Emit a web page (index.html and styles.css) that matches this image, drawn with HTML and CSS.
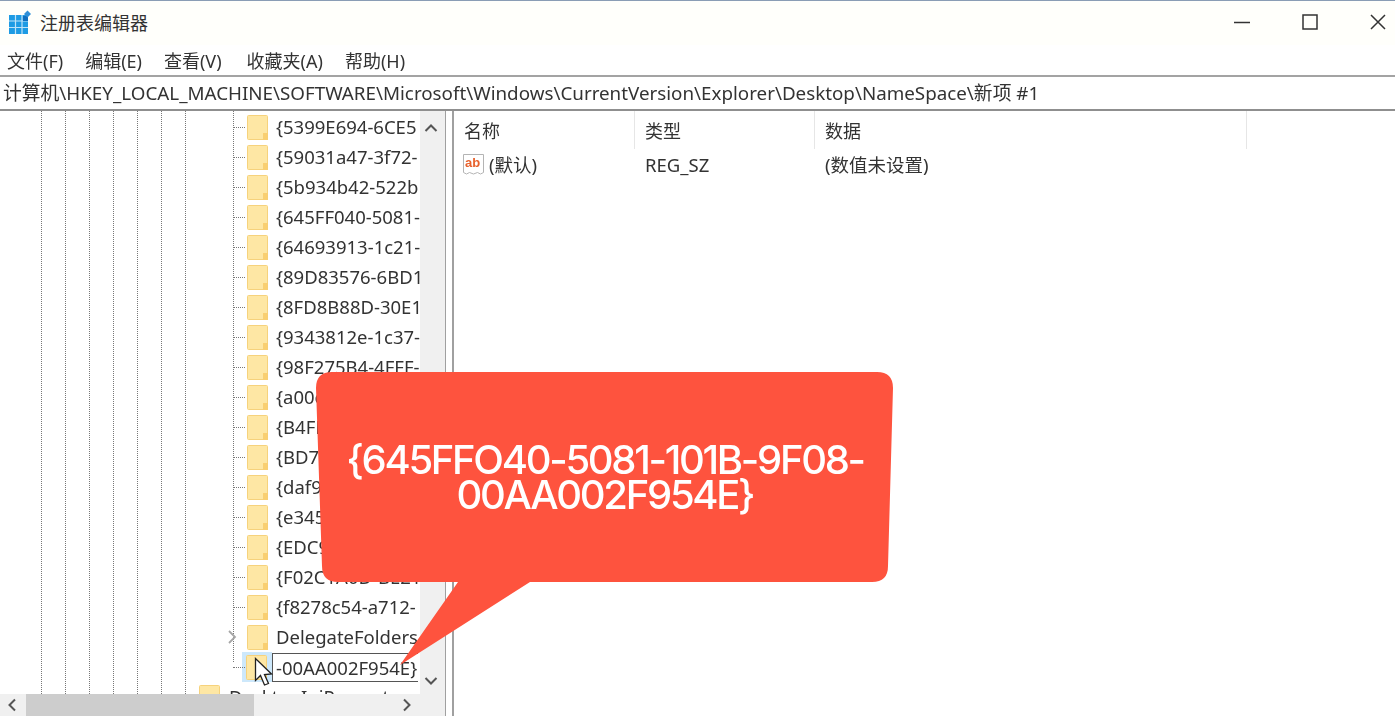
FILE: index.html
```html
<!DOCTYPE html>
<html lang="zh-CN">
<head>
  <meta charset="utf-8">
  <title>注册表编辑器</title>
  <link rel="stylesheet" href="styles.css">
</head>
<body>

<svg class="defs" width="0" height="0">
  <symbol id="folder" viewBox="0 0 22 25">
    <rect x="0.5" y="0.5" width="20" height="24" rx="1" fill="#fee7a4" stroke="#f6d27c"/>
    <rect x="16" y="18" width="5" height="7" fill="#f9cf72"/>
  </symbol>
</svg>

<div class="window">

  <div class="titlebar">
    <svg class="appicon" width="24" height="24" viewBox="0 0 24 24">
      <rect x="1" y="5" width="19" height="19" fill="#1e9be4"/>
      <path d="M1 11h19M1 17.500h19M7.500 5v19M14 5v19" stroke="#bfe3f8" stroke-width="1.200"/>
      <rect x="15" y="6" width="5" height="5" fill="#0f6fc0"/>
      <path d="M19.500 0.500l3.500 3.500-3.500 3.500-3.500-3.500z" fill="#2f8fd8"/>
    </svg>
    <span class="apptitle">注册表编辑器</span>
    <div class="winbtns">
      <svg width="16" height="16" viewBox="0 0 16 16"><path d="M0 8.500h16" stroke="#333" stroke-width="1.500"/></svg>
      <svg width="16" height="16" viewBox="0 0 16 16"><rect x="1" y="1" width="14" height="14" fill="none" stroke="#333" stroke-width="1.500"/></svg>
      <svg width="16" height="16" viewBox="0 0 16 16"><path d="M1 1l14 14M15 1l-14 14" stroke="#333" stroke-width="1.500"/></svg>
    </div>
  </div>

  <div class="menubar">
    <span>文件(F)</span>
    <span>编辑(E)</span>
    <span>查看(V)</span>
    <span class="fav">收藏夹(A)</span>
    <span>帮助(H)</span>
  </div>

  <div class="addressbar">计算机\HKEY_LOCAL_MACHINE\SOFTWARE\Microsoft\Windows\CurrentVersion\Explorer\Desktop\NameSpace\新项 #1</div>

  <div class="panes">

    <div class="treepane">
      <div class="treetop">
        <div class="tree">
          <div class="guides"><i></i><i></i><i></i><i></i><i></i><i></i><i></i><i></i></div>
          <div class="row"><b class="dash"></b><svg class="fold"><use href="#folder"/></svg><span>{5399E694-6CE5</span></div>
          <div class="row"><b class="dash"></b><svg class="fold"><use href="#folder"/></svg><span>{59031a47-3f72-</span></div>
          <div class="row"><b class="dash"></b><svg class="fold"><use href="#folder"/></svg><span>{5b934b42-522b</span></div>
          <div class="row"><b class="dash"></b><svg class="fold"><use href="#folder"/></svg><span>{645FF040-5081-</span></div>
          <div class="row"><b class="dash"></b><svg class="fold"><use href="#folder"/></svg><span>{64693913-1c21-</span></div>
          <div class="row"><b class="dash"></b><svg class="fold"><use href="#folder"/></svg><span>{89D83576-6BD1</span></div>
          <div class="row"><b class="dash"></b><svg class="fold"><use href="#folder"/></svg><span>{8FD8B88D-30E1</span></div>
          <div class="row"><b class="dash"></b><svg class="fold"><use href="#folder"/></svg><span>{9343812e-1c37-</span></div>
          <div class="row"><b class="dash"></b><svg class="fold"><use href="#folder"/></svg><span>{98F275B4-4FFF-</span></div>
          <div class="row"><b class="dash"></b><svg class="fold"><use href="#folder"/></svg><span>{a00e</span></div>
          <div class="row"><b class="dash"></b><svg class="fold"><use href="#folder"/></svg><span>{B4FB</span></div>
          <div class="row"><b class="dash"></b><svg class="fold"><use href="#folder"/></svg><span>{BD7A</span></div>
          <div class="row"><b class="dash"></b><svg class="fold"><use href="#folder"/></svg><span>{daf9</span></div>
          <div class="row"><b class="dash"></b><svg class="fold"><use href="#folder"/></svg><span>{e345</span></div>
          <div class="row"><b class="dash"></b><svg class="fold"><use href="#folder"/></svg><span>{EDC9</span></div>
          <div class="row"><b class="dash"></b><svg class="fold"><use href="#folder"/></svg><span>{F02C1A0D-BE21</span></div>
          <div class="row"><b class="dash"></b><svg class="fold"><use href="#folder"/></svg><span>{f8278c54-a712-</span></div>
          <div class="row">
            <svg class="chev" width="10" height="14" viewBox="0 0 10 14"><path d="M2 1l6 6-6 6" fill="none" stroke="#a6a6a6" stroke-width="1.800"/></svg>
            <svg class="fold"><use href="#folder"/></svg><span>DelegateFolders</span>
          </div>
          <div class="row selected">
            <b class="dash"></b>
            <div class="selbox"><svg class="fold"><use href="#folder"/></svg></div>
            <span class="editbox">-00AA002F954E}</span>
          </div>
          <div class="row outer"><svg class="fold"><use href="#folder"/></svg><span>DesktopIniProperty</span></div>
        </div>
        <div class="vscroll">
          <svg width="14" height="10" viewBox="0 0 14 10"><path d="M1.500 8l5.500-5.500 5.500 5.500" fill="none" stroke="#555" stroke-width="2"/></svg>
          <svg width="14" height="10" viewBox="0 0 14 10"><path d="M1.500 2l5.500 5.500 5.500-5.500" fill="none" stroke="#555" stroke-width="2"/></svg>
        </div>
      </div>
      <div class="hscroll">
        <svg class="harrow" width="10" height="14" viewBox="0 0 10 14"><path d="M8 1.500l-5.500 5.500 5.500 5.500" fill="none" stroke="#555" stroke-width="2"/></svg>
        <div class="thumb"></div>
        <svg class="harrow right" width="10" height="14" viewBox="0 0 10 14"><path d="M2 1.500l5.500 5.500-5.500 5.500" fill="none" stroke="#555" stroke-width="2"/></svg>
      </div>
    </div>

    <div class="listpane">
      <div class="listhead">
        <div class="col name">名称</div>
        <div class="col type">类型</div>
        <div class="col data">数据</div>
      </div>
      <div class="listrow">
        <div class="col name">
          <svg width="24" height="24" viewBox="0 0 24 24">
            <path d="M1.500 2.500h20v18l-3 1.500-3-1.500-4 1.500-4-1.500-3 1.500-3-1.500z" fill="#fff" stroke="#b4b4b4"/>
            <text class="abtext" x="3" y="15">ab</text>
          </svg>
          <span>(默认)</span>
        </div>
        <div class="col type">REG_SZ</div>
        <div class="col data">(数值未设置)</div>
      </div>
    </div>

  </div>

  <svg class="cursor" width="20" height="30" viewBox="0 0 20 30">
    <path d="M1.500 1.500v22l5-5 4 9.500 4-1.500-4-9 7-.5z" fill="#fff" stroke="#222" stroke-width="1.300"/>
  </svg>

  <div class="callout">
    <svg class="bubble" width="600" height="310" viewBox="0 0 600 310">
      <path d="M22 2H567Q583 2 583 18L578 196Q578 212 562 212H220L90 295L148 212H28Q12 212 12 196L6 18Q6 2 22 2Z" fill="#fe533e"/>
    </svg>
    <div class="bubbletext">{645FFO40-5081-101B-9F08-<br>00AA002F954E}</div>
  </div>

</div>

</body>
</html>
```

FILE: styles.css
```css
html, body {
  margin: 0;
  height: 100%;
  overflow: hidden;
  background-color: #fff;
}

body {
  font-family: "Noto Sans", "Noto Sans CJK SC", sans-serif;
  font-size: 18.500px;
  color: #333;
}

.defs {
  display: block;
}

.window {
  position: relative;
  width: 1395px;
  height: 716px;
  overflow: hidden;
  filter: blur(0.35px);
}

/* title bar */
.titlebar {
  display: flex;
  align-items: center;
  box-sizing: border-box;
  height: 45px;
  padding-left: 8px;
  padding-bottom: 2px;
  border-top: 1px solid #8a9db5;
  background-color: #fffffb;
}

.appicon {
  margin-right: 8px;
}

.apptitle {
  font-size: 18px;
}

.winbtns {
  display: flex;
  gap: 52px;
  margin-left: auto;
  margin-right: 9px;
}

/* menu */
.menubar {
  display: flex;
  gap: 22px;
  align-items: center;
  height: 29px;
  padding-left: 7px;
  padding-bottom: 1px;
  font-size: 18px;
  background-color: #fff;
}

.menubar .fav {
  margin-left: 3px;
}

.addressbar {
  height: 32px;
  line-height: 33px;
  padding-left: 3px;
  border-top: 2px solid #a3a3a3;
  border-bottom: 2px solid #8f8f8f;
  white-space: nowrap;
  font-size: 18.800px;
}

/* panes */
.panes {
  display: flex;
  height: 605px;
}

.treepane {
  width: 445px;
  display: flex;
  flex-direction: column;
  flex-shrink: 0;
  background-color: #f0f0f0;
  border-right: 1px solid #a0a0a0;
}

.treetop {
  display: flex;
  height: 583px;
}

.tree {
  position: relative;
  width: 420px;
  padding-top: 1px;
  overflow: hidden;
  background-color: #fff;
}

.guides {
  position: absolute;
  left: 41px;
  top: 0;
  bottom: 0;
  display: flex;
  gap: 23px;
}

.guides i {
  width: 1px;
  background-image: repeating-linear-gradient(to bottom, #777 0 1px, transparent 1px 2px);
}

.guides i:last-child {
  margin-left: 24px;
  height: 552px;
}

.row {
  position: relative;
  display: flex;
  align-items: center;
  height: 30px;
  padding-left: 247px;
  white-space: nowrap;
}

.row > span {
  padding-bottom: 2px;
}

.row .fold {
  width: 22px;
  height: 25px;
  margin-right: 7px;
  flex-shrink: 0;
}

.dash {
  position: absolute;
  left: 233px;
  top: 15px;
  width: 12px;
  border-top: 1px dotted #777;
}

.chev {
  position: absolute;
  left: 227px;
  top: 8px;
}

.selected {
  padding-left: 242px;
}

.selbox {
  display: flex;
  justify-content: center;
  align-items: center;
  width: 30px;
  height: 30px;
  background-color: #cde8fb;
}

.selbox .fold {
  margin-right: 0;
}

.row > .editbox {
  width: 146px;
  height: 29px;
  line-height: 27px;
  padding: 0 0 0 3px;
  border: 1px solid #555;
  border-right: 0;
  box-sizing: border-box;
  background-color: #fff;
  overflow: hidden;
}

.outer {
  padding-left: 199px;
}

.outer .fold {
  margin-right: 8px;
}

.vscroll {
  width: 23px;
  display: flex;
  flex-direction: column;
  justify-content: space-between;
  align-items: center;
  padding: 12px 2px 8px 0;
  box-sizing: border-box;
  background-color: #f0f0f0;
}

.hscroll {
  position: relative;
  flex: 1;
  display: flex;
  align-items: center;
  width: 420px;
  background-color: #f0f0f0;
}

.harrow {
  margin-left: 7px;
}

.harrow.right {
  margin-left: 138px;
}

.thumb {
  width: 228px;
  height: 100%;
  margin-left: 9px;
  margin-right: 10px;
  background-color: #cdcdcd;
}

.listpane {
  flex: 1;
  margin-left: 6px;
  border-left: 2px solid #a0a0a0;
}

.listhead {
  display: flex;
  height: 38px;
  align-items: center;
}

.listrow {
  display: flex;
  height: 30px;
  align-items: center;
}

.col {
  box-sizing: border-box;
  height: 100%;
  display: flex;
  align-items: center;
  padding-left: 10px;
  white-space: nowrap;
}

.name {
  width: 181px;
}

.type {
  width: 180px;
}

.data {
  width: 432px;
}

.listhead .col {
  border-right: 1px solid #e6e6e6;
  font-size: 18px;
}

.listrow .name {
  padding-left: 8px;
  gap: 3px;
}

.abtext {
  font-family: "Liberation Sans", sans-serif;
  font-size: 13px;
  font-weight: bold;
  fill: #e8622d;
}

/* mouse pointer over the edit box */
.cursor {
  position: absolute;
  left: 254px;
  top: 657px;
}

/* speech bubble */
.callout {
  position: absolute;
  left: 310px;
  top: 370px;
  width: 600px;
  height: 310px;
}

.bubble {
  position: absolute;
  left: 0;
  top: 0;
}

.bubbletext {
  position: relative;
  width: 590px;
  padding-top: 72px;
  text-align: center;
  font-family: Inter, sans-serif;
  font-size: 40px;
  font-weight: 500;
  line-height: 35px;
  letter-spacing: -2.300px;
  color: #fff;
}
```
